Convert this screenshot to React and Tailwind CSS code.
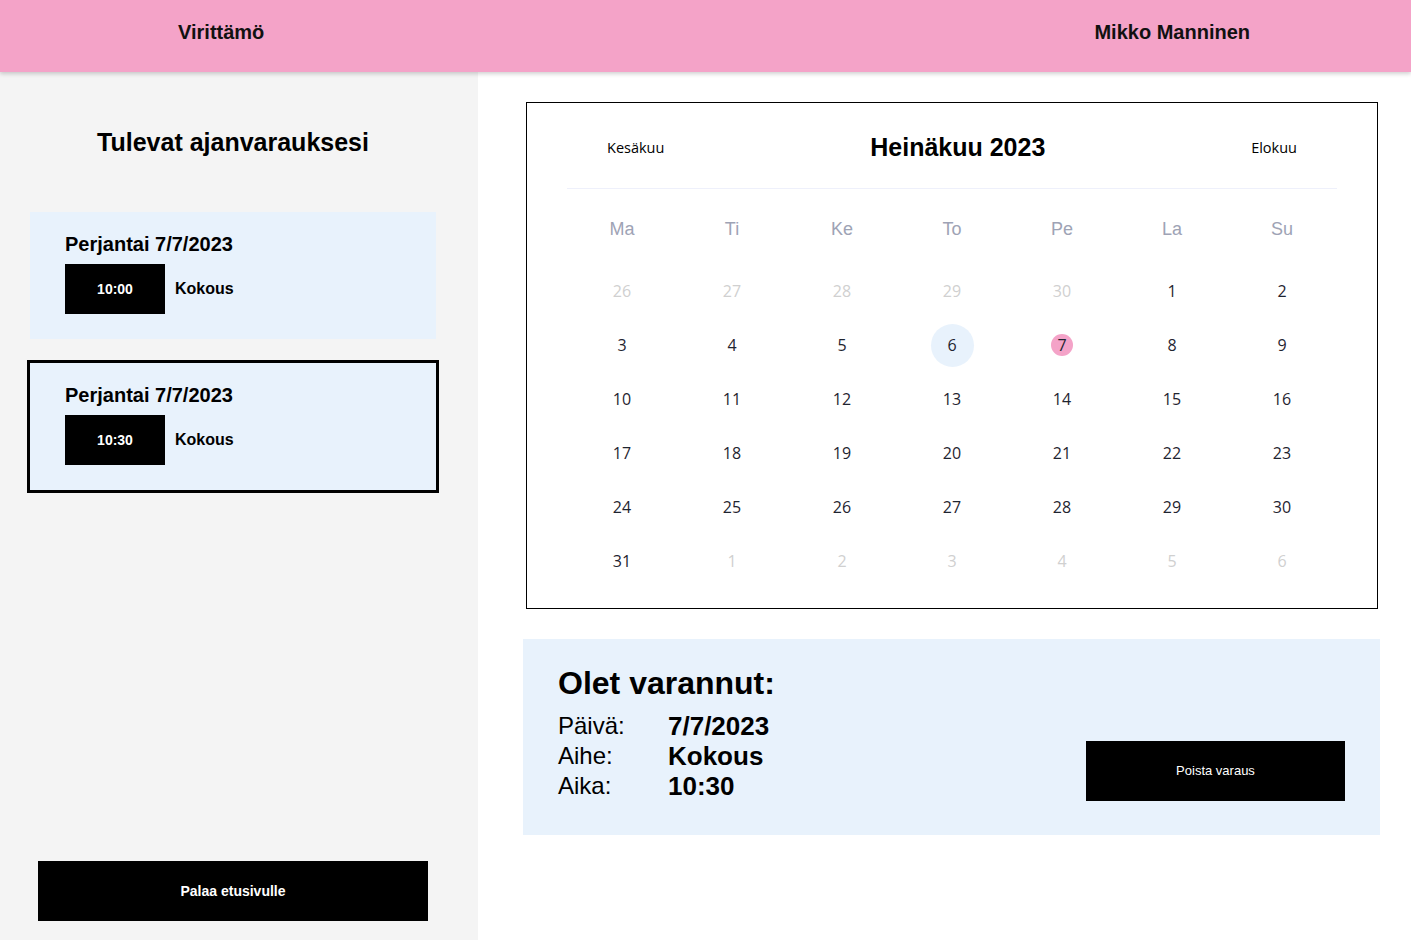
import React from "react";

const arial = { fontFamily: '"Liberation Sans", Arial, sans-serif' };
const segoe = { fontFamily: '"Open Sans", "Noto Sans", sans-serif' };

const weeks = [
  [[26, 0], [27, 0], [28, 0], [29, 0], [30, 0], [1, 1], [2, 1]],
  [[3, 1], [4, 1], [5, 1], [6, 1], [7, 1], [8, 1], [9, 1]],
  [[10, 1], [11, 1], [12, 1], [13, 1], [14, 1], [15, 1], [16, 1]],
  [[17, 1], [18, 1], [19, 1], [20, 1], [21, 1], [22, 1], [23, 1]],
  [[24, 1], [25, 1], [26, 1], [27, 1], [28, 1], [29, 1], [30, 1]],
  [[31, 1], [1, 0], [2, 0], [3, 0], [4, 0], [5, 0], [6, 0]],
];

function DayCell({ d, cur, r }) {
  const isToday = cur && r === 1 && d === 6;
  const isSel = cur && r === 1 && d === 7;
  let inner;
  if (isToday) {
    inner = (
      <span className="flex h-[43px] w-[43px] items-center justify-center rounded-full bg-[#e8f2fc] text-[#1f2430]">
        {d}
      </span>
    );
  } else if (isSel) {
    inner = (
      <span className="flex h-[22px] w-[22px] items-center justify-center rounded-full bg-[#f4a3c8] text-[#1f2430]">
        {d}
      </span>
    );
  } else {
    inner = <span className={cur ? "text-[#1f2430]" : "text-[#d0d0d0]"}>{d}</span>;
  }
  return (
    <div className="flex h-[54px] items-center justify-center text-[16px]" style={segoe}>
      {inner}
    </div>
  );
}

function BookingCard({ time, selected }) {
  return (
    <div
      className={
        "bg-[#e8f2fc] pl-[35px] pt-[20px] pb-[25px] " +
        (selected ? "outline-[3px] outline-solid outline-black" : "")
      }
    >
      <div className="text-[20px] font-bold leading-[24px] text-black" style={arial}>
        Perjantai 7/7/2023
      </div>
      <div className="mt-[8px] flex items-center">
        <div
          className="flex h-[50px] w-[100px] items-center justify-center bg-black text-[14px] font-bold text-white"
          style={arial}
        >
          {time}
        </div>
        <div className="ml-[10px] text-[16px] font-bold text-black" style={arial}>
          Kokous
        </div>
      </div>
    </div>
  );
}

export default function App() {
  return (
    <div className="flex h-[940px] w-full flex-col overflow-hidden bg-white" style={arial}>
      <header className="relative z-10 flex h-[72px] shrink-0 items-center justify-between bg-[#f4a3c8] pb-[8px] pl-[178px] pr-[161px] shadow-[0_2px_4px_rgba(0,0,0,0.18)]">
        <div className="text-[20px] font-bold text-[#111]">Virittämö</div>
        <div className="text-[20px] font-bold text-[#111]">Mikko Manninen</div>
      </header>

      <div className="flex flex-1">
        <aside className="flex w-[478px] shrink-0 flex-col bg-[#f4f4f4]">
          <div className="ml-[30px] flex w-[406px] flex-1 flex-col">
            <h1 className="mt-[56px] text-center text-[25px] font-bold leading-[28px] text-black">
              Tulevat ajanvarauksesi
            </h1>
            <div className="mt-[56px]">
              <BookingCard time="10:00" />
            </div>
            <div className="mt-[24px]">
              <BookingCard time="10:30" selected />
            </div>
            <button className="mx-[8px] mb-[19px] mt-auto flex h-[60px] items-center justify-center bg-black text-[14px] font-bold text-white">
              Palaa etusivulle
            </button>
          </div>
        </aside>

        <main className="flex flex-1 flex-col">
          <div className="ml-[48px] mt-[30px] w-[852px] border border-black bg-white px-[40px] pb-[20px]">
            <div className="flex h-[85px] items-center justify-between px-[40px] pt-[5px]">
              <span className="text-[14.5px] text-black" style={segoe}>Kesäkuu</span>
              <span className="text-[25px] font-bold text-black" style={arial}>Heinäkuu 2023</span>
              <span className="text-[14.5px] text-black" style={segoe}>Elokuu</span>
            </div>
            <div className="h-px bg-[#eef0fb]" />
            <div className="mt-[13px] grid grid-cols-7">
              {["Ma", "Ti", "Ke", "To", "Pe", "La", "Su"].map((d) => (
                <div
                  key={d}
                  className="flex h-[54px] items-center justify-center text-[18px] text-[#9ea3b5]"
                  style={arial}
                >
                  {d}
                </div>
              ))}
            </div>
            <div className="mt-[8px] grid grid-cols-7">
              {weeks.map((w, r) =>
                w.map(([d, cur], c) => <DayCell key={r + "-" + c} d={d} cur={!!cur} r={r} />)
              )}
            </div>
          </div>

          <div className="ml-[45px] mt-[30px] flex w-[857px] items-end justify-between bg-[#e8f2fc] px-[35px] pb-[34px] pt-[24px]">
            <div>
              <div className="text-[32px] font-bold leading-[40px] text-black">Olet varannut:</div>
              <div className="mt-[8px]">
                {[
                  ["Päivä:", "7/7/2023"],
                  ["Aihe:", "Kokous"],
                  ["Aika:", "10:30"],
                ].map(([l, v]) => (
                  <div key={l} className="flex h-[30px] items-center">
                    <span className="w-[110px] text-[24px] text-black">{l}</span>
                    <span className="text-[26px] font-bold text-black">{v}</span>
                  </div>
                ))}
              </div>
            </div>
            <button className="flex h-[60px] w-[259px] items-center justify-center bg-black text-[13px] text-white">
              Poista varaus
            </button>
          </div>
        </main>
      </div>
    </div>
  );
}
